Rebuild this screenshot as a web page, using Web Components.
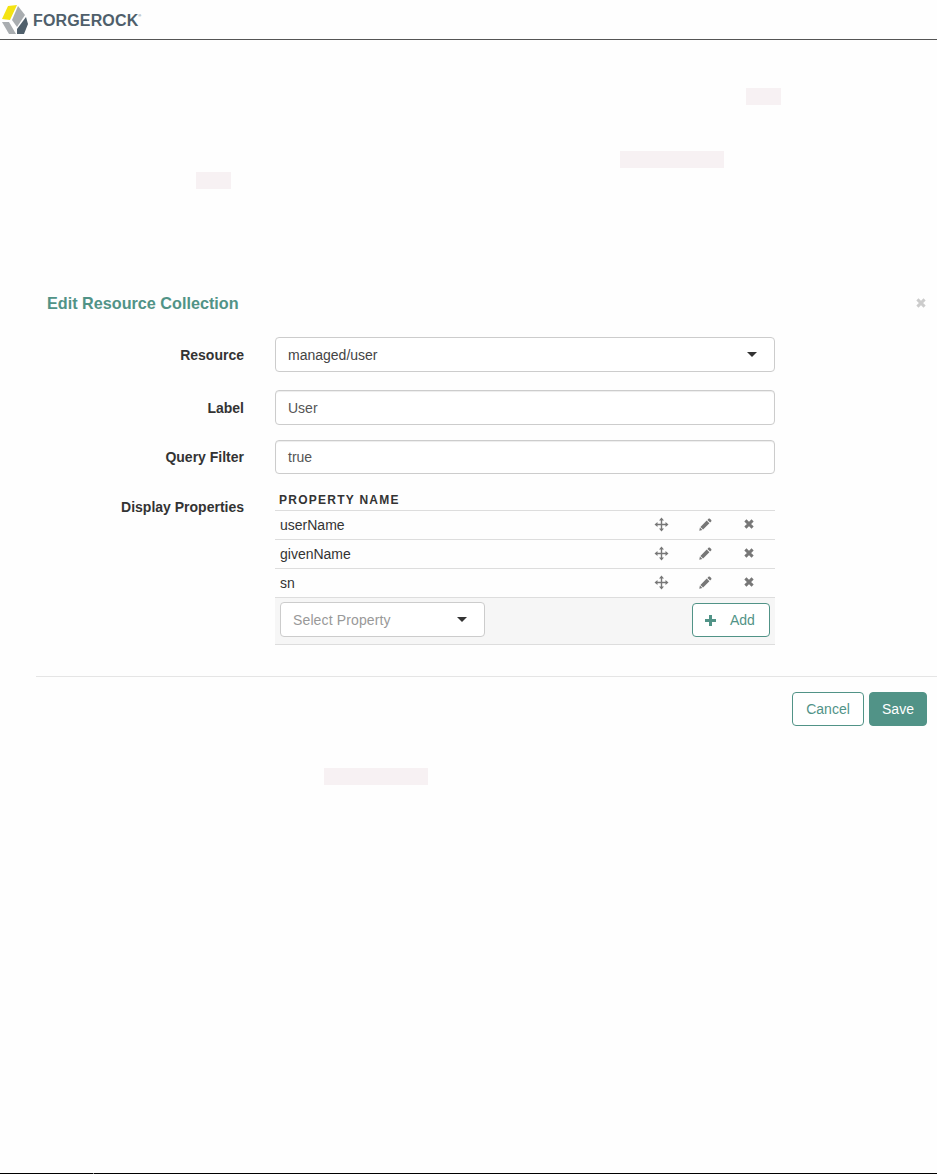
<!doctype html>
<html>
<head>
<meta charset="utf-8">
<title>Edit Resource Collection</title>
<style>
  html, body { margin: 0; height: 1174px; overflow: hidden; background: #fefefe; }
  body { font-family: "Liberation Sans", Arial, sans-serif; color: #333; display: flex; flex-direction: column; }
</style>
</head>
<body>
<doc-header></doc-header>
<doc-text top="48">
  <doc-line pad="746"><doc-chip w="35"></doc-chip></doc-line>
  <doc-line pad="620" top="46"><doc-chip w="104"></doc-chip></doc-line>
  <doc-line pad="196" top="4"><doc-chip w="35"></doc-chip></doc-line>
</doc-text>
<edit-dialog title="Edit Resource Collection">
  <form-row label="Resource" top="0" h="35"><fake-select value="managed/user"></fake-select></form-row>
  <form-row label="Label" top="18" h="35"><fake-input value="User"></fake-input></form-row>
  <form-row label="Query Filter" top="15" h="34"><fake-input value="true"></fake-input></form-row>
  <form-row label="Display Properties" top="17" h="154" block>
    <prop-table>
      <prop-row name="userName"></prop-row>
      <prop-row name="givenName"></prop-row>
      <prop-row name="sn"></prop-row>
    </prop-table>
  </form-row>
  <dialog-btn slot="footer">Cancel</dialog-btn>
  <dialog-btn slot="footer" primary>Save</dialog-btn>
</edit-dialog>
<doc-text top="42">
  <doc-line pad="324"><doc-chip w="104"></doc-chip></doc-line>
</doc-text>
<doc-footer></doc-footer>

<script>
const MOVE_ICON = `<svg width="15" height="15" viewBox="0 0 15 15" fill="#777"><path d="M6.8 3.5h1.4v3.3h3.3V5l3 2.5-3 2.5V8.200H8.200v3.300H10L7.500 14.500 5 11.500h1.800V8.200H3.500V10L.5 7.500l3-2.500v1.800h3.300V3.500H5L7.500.5 10 3.500z"/></svg>`
const PENCIL_ICON = `<svg width="13" height="13" viewBox="0 0 13 13" fill="#777"><path d="M9.500.8c.4-.4 1-.4 1.400 0l1.300 1.300c.4.400.4 1 0 1.400l-1.100 1.100-2.700-2.700zM7.700 2.600l2.700 2.700-6.300 6.300-2.700-2.700zM.9 9.600l2.500 2.500-3.100.7z"/></svg>`
const CROSS_ICON = color => `<svg width="10" height="10" viewBox="0 0 10 10" fill="none" stroke="${color}" stroke-width="3"><path d="M1.400 1.400l7.200 7.200M8.600 1.400l-7.200 7.200"/></svg>`
const PLUS_ICON = `<svg width="11" height="11" viewBox="0 0 11 11" fill="#519387"><path d="M4 0h3v4h4v3H7v4H4V7H0V4h4z"/></svg>`

class DocHeader extends HTMLElement {
  constructor() {
    super()
    this.attachShadow({ mode: 'open' })
    this.shadowRoot.innerHTML = `
      <style>
        :host { display: flex; align-items: center; height: 39px; border-bottom: 1px solid #555; flex: none; }
        svg { display: block; }
        span { font: bold 16px/1 "Liberation Sans", sans-serif; color: #4f5f6b; margin-left: 3px; margin-top: 2px; letter-spacing: .15px; }
        sup { font-size: 4px; vertical-align: 9px; font-weight: normal; margin-left: 0; }
      </style>
      <svg width="30" height="36" viewBox="0 0 30 36">
        <polygon points="8,4 17,3 10,18 2,17" fill="#f4e312"/>
        <polygon points="18,4 25,13 17,25 12,18" fill="#a9adb0"/>
        <polygon points="2,20 9,20 16,32 9,32" fill="#a9adb0"/>
        <polygon points="26,15 28,22 24,32 17,32 17,27" fill="#4f5f6b"/>
      </svg>
      <span>FORGEROCK<sup>®</sup></span>
    `
  }
}

class DocText extends HTMLElement {
  constructor() {
    super()
    this.attachShadow({ mode: 'open' })
    this.shadowRoot.innerHTML = `
      <style>:host { display: flex; flex-direction: column; flex: none; }</style>
      <slot></slot>
    `
  }
  connectedCallback() {
    this.style.marginTop = (this.getAttribute('top') || 0) + 'px'
  }
}

class DocLine extends HTMLElement {
  constructor() {
    super()
    this.attachShadow({ mode: 'open' })
    this.shadowRoot.innerHTML = `
      <style>:host { display: flex; height: 17px; }</style>
      <slot></slot>
    `
  }
  connectedCallback() {
    this.style.paddingLeft = this.getAttribute('pad') + 'px'
    this.style.marginTop = (this.getAttribute('top') || 0) + 'px'
  }
}

class DocChip extends HTMLElement {
  constructor() {
    super()
    this.attachShadow({ mode: 'open' })
    this.shadowRoot.innerHTML = `<style>:host { display: block; height: 17px; background: #f7f1f3; }</style>`
  }
  connectedCallback() {
    this.style.width = this.getAttribute('w') + 'px'
  }
}

class EditDialog extends HTMLElement {
  constructor() {
    super()
    this.attachShadow({ mode: 'open' })
    this.shadowRoot.innerHTML = `
      <style>
        :host { display: block; flex: none; margin-top: 104px; }
        .head { display: flex; justify-content: space-between; align-items: center; height: 20px; padding: 0 11px 0 47px; }
        h4 { margin: 0; font: bold 16.200px/20px "Liberation Sans", sans-serif; color: #519387; }
        .close { display: flex; }
        .body { padding: 24px 162px 0 0; }
        .foot { display: flex; justify-content: flex-end; gap: 5px; margin: 31px 0 0 36px; padding: 15px 10px 0 0; border-top: 1px solid #e5e5e5; }
      </style>
      <div class="head"><h4></h4><span class="close">${CROSS_ICON('#ccc')}</span></div>
      <div class="body"><slot></slot></div>
      <div class="foot"><slot name="footer"></slot></div>
    `
  }
  connectedCallback() {
    this.shadowRoot.querySelector('h4').textContent = this.getAttribute('title')
  }
}

class FormRow extends HTMLElement {
  constructor() {
    super()
    this.attachShadow({ mode: 'open' })
    this.shadowRoot.innerHTML = `
      <style>
        :host { display: grid; grid-template-columns: 244px 500px; column-gap: 31px; }
        label { font: bold 14px/18px "Liberation Sans", sans-serif; color: #333; text-align: right; align-self: center; }
        :host([block]) label { align-self: start; padding-top: 7px; }
        .ctl { min-width: 0; }
      </style>
      <label></label>
      <div class="ctl"><slot></slot></div>
    `
  }
  connectedCallback() {
    this.shadowRoot.querySelector('label').textContent = this.getAttribute('label')
    this.style.marginTop = this.getAttribute('top') + 'px'
    this.style.height = this.getAttribute('h') + 'px'
  }
}

class FakeInput extends HTMLElement {
  constructor() {
    super()
    this.attachShadow({ mode: 'open' })
    this.shadowRoot.innerHTML = `
      <style>
        :host { display: flex; align-items: center; box-sizing: border-box; height: 100%; padding: 0 12px; background: #fff; border: 1px solid #ccc; border-radius: 4px; font: 14px/20px "Liberation Sans", sans-serif; color: #555; box-shadow: inset 0 1px 1px rgba(0,0,0,.075); }
      </style>
      <span></span>
    `
  }
  connectedCallback() {
    this.shadowRoot.querySelector('span').textContent = this.getAttribute('value')
  }
}

class FakeSelect extends HTMLElement {
  constructor() {
    super()
    this.attachShadow({ mode: 'open' })
    this.shadowRoot.innerHTML = `
      <style>
        :host { display: flex; align-items: center; justify-content: space-between; box-sizing: border-box; height: 100%; padding: 0 17px 0 12px; background: #fff; border: 1px solid #ccc; border-radius: 4px; font: 14px/20px "Liberation Sans", sans-serif; color: #444; }
        :host([muted]) { color: #999; letter-spacing: .13px; }
        i { width: 0; height: 0; border: 5px solid transparent; border-top: 5px solid #333; border-bottom: 0; }
      </style>
      <span></span><i></i>
    `
  }
  connectedCallback() {
    this.shadowRoot.querySelector('span').textContent = this.getAttribute('value')
  }
}

class PropTable extends HTMLElement {
  constructor() {
    super()
    this.attachShadow({ mode: 'open' })
    this.shadowRoot.innerHTML = `
      <style>
        :host { display: block; }
        .th { box-sizing: border-box; height: 20px; padding: 2px 0 0 4px; border-bottom: 1px solid #ddd; font: bold 12px/15px "Liberation Sans", sans-serif; letter-spacing: 1.250px; color: #333; }
        .add { display: flex; justify-content: space-between; align-items: flex-start; box-sizing: border-box; height: 47px; padding: 4px 5px 0; background: #f6f6f6; border-bottom: 1px solid #ddd; }
        .sel { width: 205px; height: 35px; }
        dialog-btn { margin-top: 1px; }
      </style>
      <div class="th">PROPERTY NAME</div>
      <slot></slot>
      <div class="add">
        <fake-select class="sel" value="Select Property" muted></fake-select>
        <dialog-btn add>Add</dialog-btn>
      </div>
    `
  }
}

class PropRow extends HTMLElement {
  constructor() {
    super()
    this.attachShadow({ mode: 'open' })
    this.shadowRoot.innerHTML = `
      <style>
        :host { display: grid; grid-template-columns: 1fr 44px 44px 44px; align-items: center; box-sizing: border-box; height: 29px; padding: 0 4px 0 5px; border-bottom: 1px solid #ddd; font: 14px/20px "Liberation Sans", sans-serif; color: #333; }
        span { display: flex; justify-content: center; margin-bottom: 2px; }
      </style>
      <div></div>
      <span>${MOVE_ICON}</span><span>${PENCIL_ICON}</span><span>${CROSS_ICON('#777')}</span>
    `
  }
  connectedCallback() {
    this.shadowRoot.querySelector('div').textContent = this.getAttribute('name')
  }
}

class DialogBtn extends HTMLElement {
  constructor() {
    super()
    this.attachShadow({ mode: 'open' })
    this.shadowRoot.innerHTML = `
      <style>
        :host { display: flex; align-items: center; justify-content: center; box-sizing: border-box; height: 34px; width: 72px; background: #fff; border: 1px solid #519387; border-radius: 4px; font: 14px/20px "Liberation Sans", sans-serif; color: #519387; }
        :host([primary]) { width: 58px; background: #519387; color: #fff; }
        :host([add]) { width: 78px; gap: 14px; justify-content: flex-start; padding-left: 12px; }
        .ic { display: none; }
        :host([add]) .ic { display: flex; }
      </style>
      <span class="ic">${PLUS_ICON}</span><slot></slot>
    `
  }
}

class DocFooter extends HTMLElement {
  constructor() {
    super()
    this.attachShadow({ mode: 'open' })
    this.shadowRoot.innerHTML = `<style>:host { display: block; margin-top: auto; height: 1px; flex: none; background: linear-gradient(90deg, #000 93px, #888 93px, #888 94px, #000 94px); }</style>`
  }
}

customElements.define('doc-header', DocHeader)
customElements.define('doc-text', DocText)
customElements.define('doc-line', DocLine)
customElements.define('doc-chip', DocChip)
customElements.define('edit-dialog', EditDialog)
customElements.define('form-row', FormRow)
customElements.define('fake-input', FakeInput)
customElements.define('fake-select', FakeSelect)
customElements.define('prop-table', PropTable)
customElements.define('prop-row', PropRow)
customElements.define('dialog-btn', DialogBtn)
customElements.define('doc-footer', DocFooter)
</script>
</body>
</html>
